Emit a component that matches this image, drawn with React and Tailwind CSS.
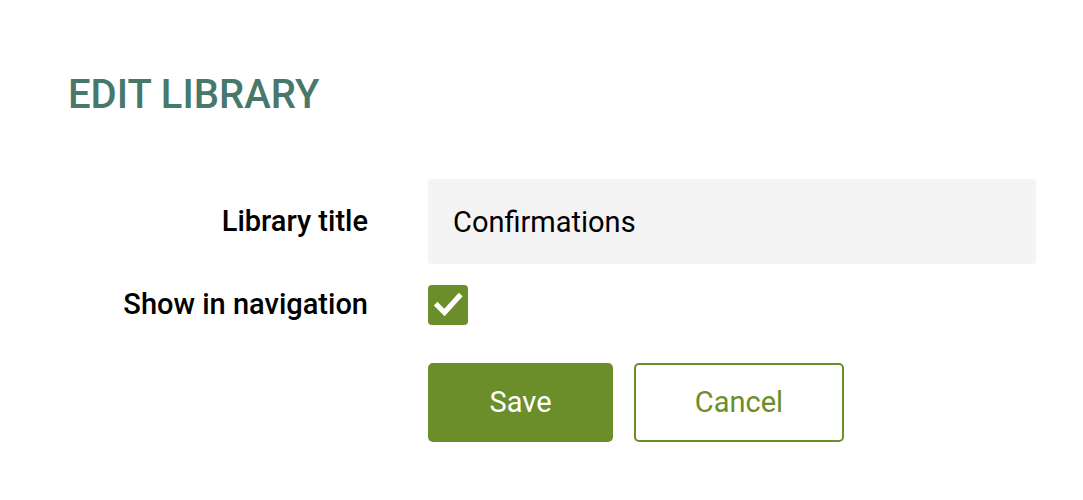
import React from "react";

export default function App() {
  return (
    <div className="min-h-[500px] bg-white pl-[68px] pt-[72px] font-['Roboto',sans-serif]">
      <h1 className="text-[40px] font-medium leading-[46px] text-[#47786b]">EDIT LIBRARY</h1>

      <form className="mt-[61px] grid grid-cols-[300px_608px] gap-x-[60px]">
        <label className="flex items-center justify-end text-[29px] font-medium text-black">
          Library title
        </label>
        <input
          defaultValue="Confirmations"
          className="h-[85px] rounded-[4px] bg-[#f4f4f4] px-[25px] text-[29px] text-black outline-none"
        />

        <label className="mt-[21px] flex h-[40px] items-center justify-end text-[29px] font-medium text-black">
          Show in navigation
        </label>
        <div className="mt-[21px]">
          <span className="block h-[40px] w-[40px] rounded-[4px] bg-[#6b8e2a]">
            <svg width="40" height="40" viewBox="0 0 40 40" fill="none">
              <path d="M9.5 20.5l7 7L31 11.5" stroke="white" strokeWidth="5.2" strokeLinecap="square" />
            </svg>
          </span>
        </div>

        <div />
        <div className="mt-[38px] flex gap-[21px]">
          <button
            type="button"
            className="h-[79px] w-[185px] rounded-[5px] bg-[#6b8e2a] text-[29px] text-white"
          >
            Save
          </button>
          <button
            type="button"
            className="h-[79px] w-[210px] rounded-[5px] border-2 border-[#6b8e2a] bg-white text-[29px] text-[#6b8e2a]"
          >
            Cancel
          </button>
        </div>
      </form>
    </div>
  );
}
